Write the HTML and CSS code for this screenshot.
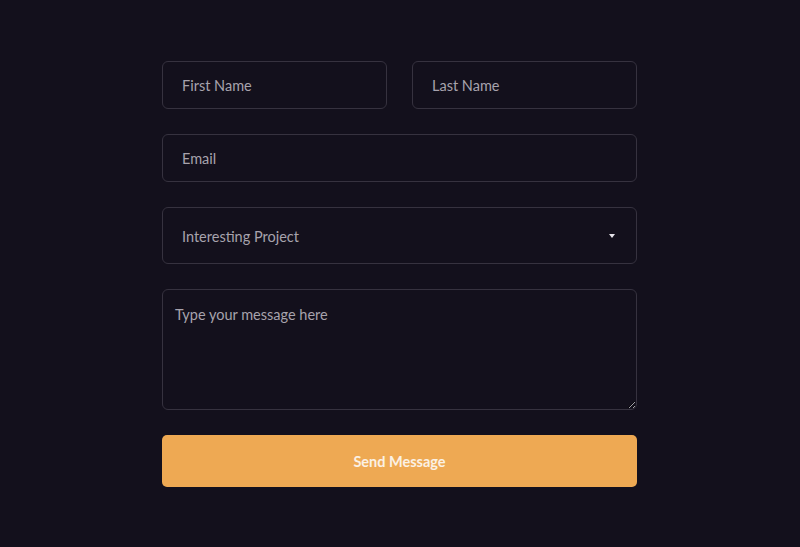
FILE: index.html
```html
<!DOCTYPE html>
<html>
<head>
<meta charset="utf-8">
<link rel="stylesheet" href="styles.css">
</head>
<body>
<form class="form">
  <div class="row two">
    <input class="field" type="text" placeholder="First Name">
    <input class="field" type="text" placeholder="Last Name">
  </div>
  <input class="field" type="email" placeholder="Email">
  <div class="select-wrap">
    <select class="field select">
      <option>Interesting Project</option>
    </select>
    <span class="caret"></span>
  </div>
  <textarea class="field message" placeholder="Type your message here"></textarea>
  <button class="send" type="button">Send Message</button>
</form>
</body>
</html>
```

FILE: styles.css
```css
html, body {
  margin: 0;
  background: #13101c;
  height: 100%;
}
body {
  font-family: "Lato", "Noto Sans", sans-serif;
}
.form {
  width: 475px;
  margin: 0 auto;
  padding: 61px 1px 0 0;
  display: flex;
  flex-direction: column;
  gap: 25px;
}
.row.two {
  display: grid;
  grid-template-columns: 1fr 1fr;
  gap: 25px;
}
.field {
  box-sizing: border-box;
  width: 100%;
  height: 48px;
  background: #13101c;
  border: 1px solid #36323f;
  border-radius: 6px;
  padding: 0 19px;
  font-family: inherit;
  font-size: 14.5px;
  color: #a7a3ad;
  outline: none;
  margin: 0;
}
.field::placeholder {
  color: #a7a3ad;
  opacity: 1;
}
.select-wrap {
  position: relative;
}
.select {
  height: 57px;
  appearance: none;
  -webkit-appearance: none;
  padding-top: 1px;
}
.caret {
  position: absolute;
  right: 22px;
  top: 27px;
  width: 0;
  height: 0;
  border-left: 3.5px solid transparent;
  border-right: 3.5px solid transparent;
  border-top: 4px solid #e6e4ea;
}
.message {
  height: 121px;
  padding: 16px 12px;
  resize: vertical;
  display: block;
}
.send {
  height: 52px;
  border: none;
  border-radius: 5px;
  background: #eea953;
  color: #fbf1e4;
  font-family: inherit;
  font-size: 14.5px;
  font-weight: 700;
  cursor: pointer;
}
```
